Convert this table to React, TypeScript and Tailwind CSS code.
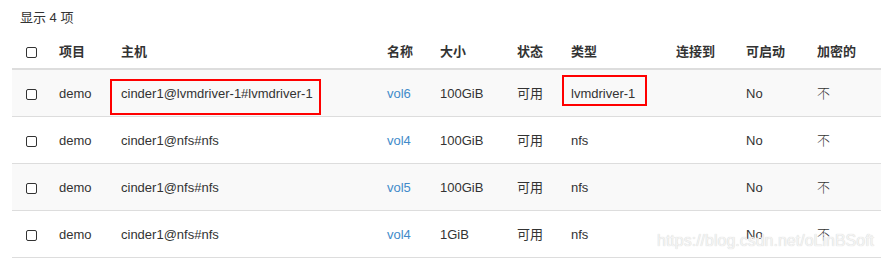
import React from "react";

type Row = {
  project: string;
  host: string;
  name: string;
  size: string;
  status: string;
  type: string;
  attached: string;
  bootable: string;
  encrypted: string;
};

const rows: Row[] = [
  { project: "demo", host: "cinder1@lvmdriver-1#lvmdriver-1", name: "vol6", size: "100GiB", status: "可用", type: "lvmdriver-1", attached: "", bootable: "No", encrypted: "不" },
  { project: "demo", host: "cinder1@nfs#nfs", name: "vol4", size: "100GiB", status: "可用", type: "nfs", attached: "", bootable: "No", encrypted: "不" },
  { project: "demo", host: "cinder1@nfs#nfs", name: "vol5", size: "100GiB", status: "可用", type: "nfs", attached: "", bootable: "No", encrypted: "不" },
  { project: "demo", host: "cinder1@nfs#nfs", name: "vol4", size: "1GiB", status: "可用", type: "nfs", attached: "", bootable: "No", encrypted: "不" },
];

const cols = "grid grid-cols-[37px_62px_266px_53px_77px_54px_105px_70px_71px_74px]";

function Checkbox() {
  return <span className="block w-[11px] h-[11px] rounded-[2px] border border-[#333] bg-white" />;
}

export default function App() {
  return (
    <div className="w-[881px] h-[259px] bg-white overflow-hidden relative font-['Liberation_Sans','Noto_Sans_CJK_SC',sans-serif] text-[13px] text-[#333]">
      <div className="h-[36px] pl-[20px] flex items-center">显示 4 项</div>

      <div className="ml-[12px]">
        <div className={`${cols} h-[34px] items-center font-bold border-b-2 border-[#ddd]`}>
          <div className="pl-[14px]"><Checkbox /></div>
          <div className="pl-[10px]">项目</div>
          <div className="pl-[10px]">主机</div>
          <div className="pl-[10px]">名称</div>
          <div className="pl-[10px]">大小</div>
          <div className="pl-[10px]">状态</div>
          <div className="pl-[10px]">类型</div>
          <div className="pl-[10px]">连接到</div>
          <div className="pl-[10px]">可启动</div>
          <div className="pl-[10px]">加密的</div>
        </div>

        {rows.map((r, i) => (
          <div
            key={i}
            className={`${cols} h-[47px] items-center pt-[2px] border-b border-[#ddd] ${i % 2 === 0 ? "bg-[#f9f9f9]" : "bg-white"}`}
          >
            <div className="pl-[14px]"><Checkbox /></div>
            <div className="pl-[10px]">{r.project}</div>
            <div className="pl-[10px] relative self-stretch flex items-center">
              {r.host}
              {i === 0 && (
                <span className="absolute left-[-1px] top-[7px] w-[211px] h-[36px] border-2 border-[#ff0000]" />
              )}
            </div>
            <div className="pl-[10px] text-[#428bca]">{r.name}</div>
            <div className="pl-[10px]">{r.size}</div>
            <div className="pl-[10px]">{r.status}</div>
            <div className="pl-[10px] relative self-stretch flex items-center">
              {r.type}
              {i === 0 && (
                <span className="absolute left-[1px] top-[3px] w-[85px] h-[31px] border-2 border-[#ff0000]" />
              )}
            </div>
            <div className="pl-[10px]">{r.attached}</div>
            <div className="pl-[10px]">{r.bootable}</div>
            <div className="pl-[10px] font-light">{r.encrypted}</div>
          </div>
        ))}
      </div>

      <div className="absolute left-[657px] top-[229px] text-[16px] text-[#f4f4f4] [text-shadow:0_0_1px_#c8c8c8]">
        https://blog.csdn.net/oLinBSoft
      </div>
    </div>
  );
}
